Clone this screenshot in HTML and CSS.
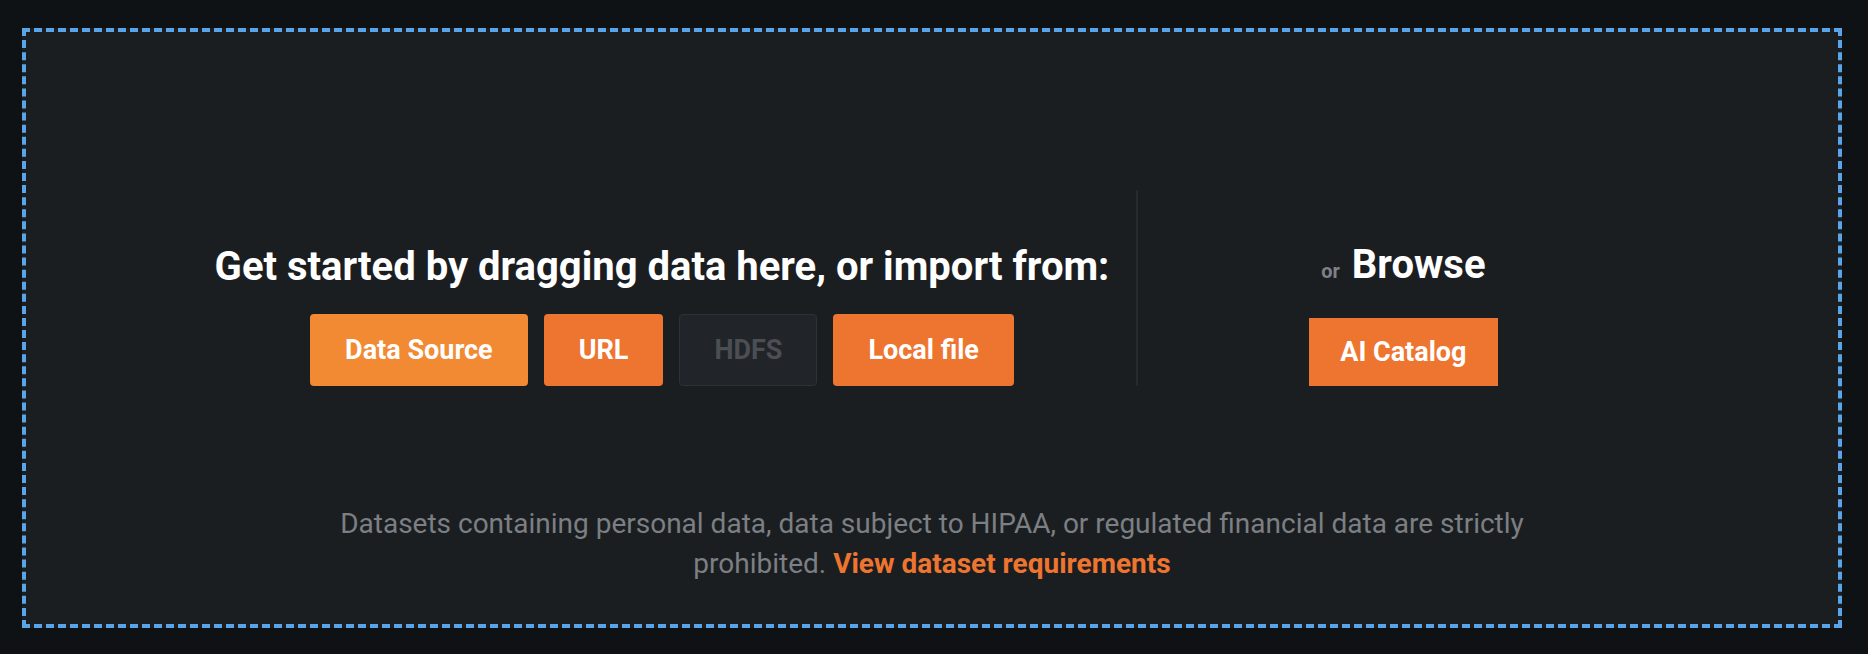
FILE: index.html
```html
<!DOCTYPE html>
<html lang="en">
<head>
<meta charset="utf-8">
<title>Import data</title>
<link rel="stylesheet" href="styles.css">
</head>
<body>
<div class="page">
  <div class="dropzone">
    <div class="sources">
      <div class="col-import">
        <h2 class="title">Get started by dragging data here, or import from:</h2>
        <div class="btn-row">
          <button class="btn btn-primary">Data Source</button>
          <button class="btn">URL</button>
          <button class="btn btn-disabled" disabled>HDFS</button>
          <button class="btn">Local file</button>
        </div>
      </div>
      <div class="col-browse">
        <h2 class="title browse-title"><span class="or">or</span>Browse</h2>
        <button class="btn btn-square">AI Catalog</button>
      </div>
    </div>
    <p class="disclaimer">Datasets containing personal data, data subject to HIPAA, or regulated financial data are strictly prohibited. <a class="link" href="#">View dataset requirements</a></p>
  </div>
</div>
</body>
</html>
```

FILE: styles.css
```css
html, body {
  margin: 0;
  padding: 0;
  background: #0f1215;
  font-family: Roboto, "Liberation Sans", Arial, sans-serif;
}

.page {
  padding: 28px 26px 26px 22px;
}

.dropzone {
  box-sizing: border-box;
  height: 600px;
  border: 4px dashed #5aa5e7;
  background: #1b1e21;
  display: flex;
  flex-direction: column;
  align-items: center;
  padding-top: 158px;
}

.sources {
  display: flex;
  height: 196px;
}

.col-import {
  padding: 0 27px;
  border-right: 2px solid #26292d;
  display: flex;
  flex-direction: column;
  justify-content: flex-end;
  align-items: center;
}

.col-browse {
  box-sizing: border-box;
  width: 538px;
  padding-right: 8px;
  display: flex;
  flex-direction: column;
  justify-content: flex-end;
  align-items: center;
}

.title {
  margin: 0;
  color: #ffffff;
  font-size: 40px;
  line-height: 47px;
  font-weight: 700;
  white-space: nowrap;
}

.btn-row {
  display: flex;
  gap: 16px;
  margin-top: 24px;
}

.btn {
  height: 72px;
  padding: 0 34px;
  border: 1px solid transparent;
  border-radius: 4px;
  background: #ee7530;
  color: #ffffff;
  font-family: inherit;
  font-size: 27px;
  font-weight: 700;
  cursor: pointer;
}

.btn-primary {
  background: #f28a33;
}

.btn-disabled {
  background: #212428;
  border-color: #2e3135;
  color: #4b4e52;
  cursor: default;
}

.browse-title {
  display: flex;
  align-items: baseline;
}

.or {
  color: #7e8185;
  font-size: 20px;
  margin-right: 12px;
}

.btn-square {
  border-radius: 0;
  height: 68px;
  padding: 0 30px;
  margin-top: 23px;
}

.disclaimer {
  margin: 118px 0 0;
  max-width: 1200px;
  text-align: center;
  color: #7c7f83;
  font-size: 28px;
  line-height: 40px;
}

.link {
  color: #ee7530;
  font-weight: 700;
  text-decoration: none;
}
```
